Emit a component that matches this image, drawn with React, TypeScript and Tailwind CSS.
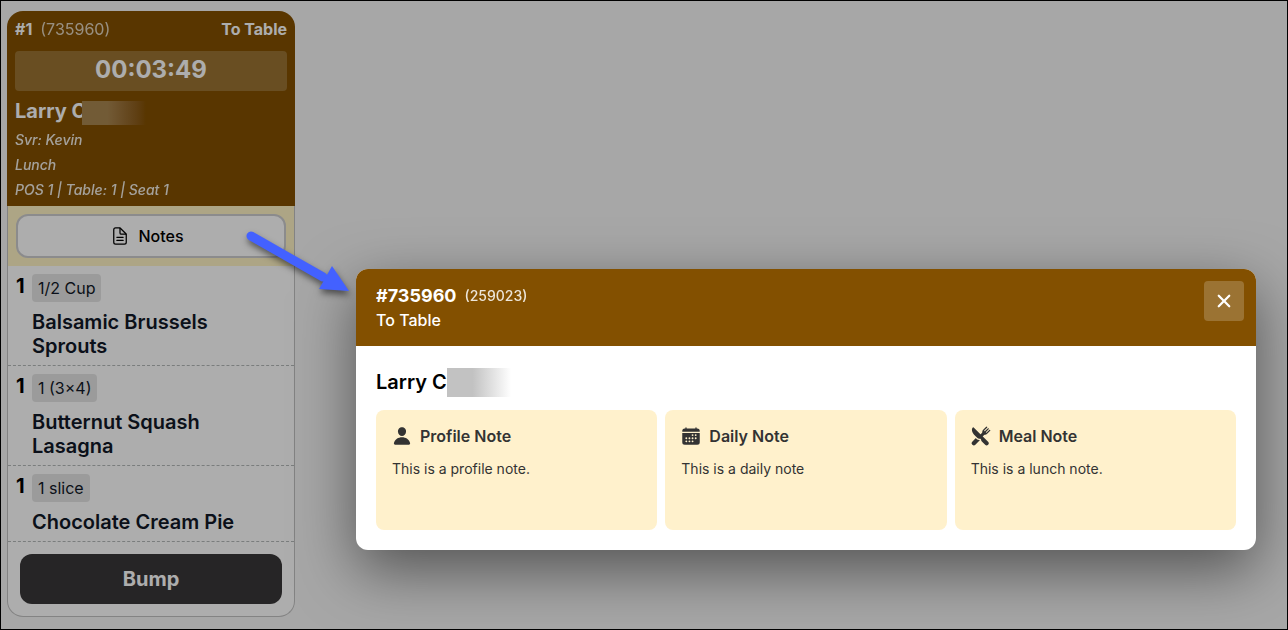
import type { ReactNode } from "react";
import { IoCalendar, IoClose, IoDocumentTextOutline, IoPerson, IoRestaurant } from "react-icons/io5";

interface TicketItem {
  qty: number;
  portion: string;
  name: string;
}

interface Note {
  title: string;
  text: string;
  icon: ReactNode;
}

const items: TicketItem[] = [
  { qty: 1, portion: "1/2 Cup", name: "Balsamic Brussels Sprouts" },
  { qty: 1, portion: "1 (3×4)", name: "Butternut Squash Lasagna" },
  { qty: 1, portion: "1 slice", name: "Chocolate Cream Pie" },
];

const notes: Note[] = [
  { title: "Profile Note", text: "This is a profile note.", icon: <IoPerson size={20} /> },
  { title: "Daily Note", text: "This is a daily note", icon: <IoCalendar size={20} /> },
  { title: "Meal Note", text: "This is a lunch note.", icon: <IoRestaurant size={20} /> },
];

function TicketCard() {
  return (
    <article className="w-72 rounded-2xl bg-white">
      <header className="rounded-t-2xl bg-[#835000] px-2 pt-1.5 pb-1 text-white">
        <div className="flex h-6 items-center gap-2 text-base">
          <span className="font-bold">#1</span>
          <span className="opacity-75">(735960)</span>
          <span className="ml-auto font-bold">To Table</span>
        </div>
        <div className="mt-2.5 flex h-10 items-center justify-center rounded bg-white/20 pb-0.5 text-2xl font-bold">
          00:03:49
        </div>
        <h2 className="relative pt-1 text-xl leading-8 font-bold">
          Larry C
          <span className="absolute top-2.5 left-[67px] h-6 w-16 bg-linear-to-r from-[#a98650] from-40% to-[#835000]" />
        </h2>
        <div className="text-sm leading-[25px] font-medium italic opacity-90">
          <p>Svr: Kevin</p>
          <p>Lunch</p>
          <p>POS 1 | Table: 1 | Seat 1</p>
        </div>
      </header>

      <div className="rounded-b-2xl border-x border-b border-[#c2c2c2]">
        <div className="bg-[#fff3c4] p-2">
          <button
            type="button"
            className="flex h-11 w-full items-center justify-center gap-2 rounded-xl border-2 border-[#cdcdcf] bg-white pr-2 text-base font-medium text-black"
          >
            <IoDocumentTextOutline size={20} />
            Notes
          </button>
        </div>
        <ul>
          {items.map((item) => (
            <li key={item.name} className="flex border-b border-dashed border-[#b4b9b9] px-2 pt-2 pb-[7px]">
              <span className="w-4 shrink-0 text-xl leading-6 font-bold text-black">{item.qty}</span>
              <div className="text-[#111827]">
                <span className="inline-flex h-7 items-center rounded bg-[#e5e5e5] px-1.5 align-top text-base">
                  {item.portion}
                </span>
                <h3 className="mt-2 max-w-52 text-xl leading-6 font-semibold">{item.name}</h3>
              </div>
            </li>
          ))}
        </ul>
        <div className="p-3">
          <button type="button" className="h-[50px] w-full rounded-xl bg-[#393738] text-xl font-bold text-white">
            Bump
          </button>
        </div>
      </div>
    </article>
  );
}

function NotesDialog() {
  return (
    <div className="absolute inset-0 flex items-end justify-end bg-black/32 pr-[31px] pb-[79px]">
      <section
        role="dialog"
        aria-labelledby="notes-title"
        className="w-[900px] max-w-full overflow-hidden rounded-xl bg-white shadow-[0_20px_60px_rgba(0,0,0,0.5)]"
      >
        <header className="flex items-start justify-between bg-[#835000] pr-3 pl-5 text-white">
          <div className="pt-[15px] pb-3.5 leading-6">
            <h2 id="notes-title" className="flex items-center gap-2 text-lg leading-6 font-bold">
              #735960
              <span className="text-sm font-medium opacity-85">(259023)</span>
            </h2>
            <p className="text-base leading-6 font-medium">To Table</p>
          </div>
          <button
            type="button"
            aria-label="Close"
            className="mt-3 flex size-10 items-center justify-center rounded bg-white/20"
          >
            <IoClose size={24} />
          </button>
        </header>
        <div className="p-5">
          <h3 className="relative text-xl leading-8 font-semibold text-black">
            Larry C
            <span className="absolute top-0.5 left-[71px] h-[29px] w-16 bg-linear-to-r from-[#c2c2c2] from-40% to-white" />
          </h3>
          <div className="mt-3 grid grid-cols-3 gap-2">
            {notes.map((note) => (
              <article key={note.title} className="min-h-30 rounded-lg bg-[#fff1cc] p-4 text-[#333333]">
                <h4 className="flex h-5 items-center gap-2 text-base font-semibold">
                  {note.icon}
                  {note.title}
                </h4>
                <p className="mt-[13px] text-sm leading-5">{note.text}</p>
              </article>
            ))}
          </div>
        </div>
      </section>
    </div>
  );
}

// Callout pointing from the Notes button to the dialog it opens
function CalloutArrow() {
  return (
    <svg
      className="pointer-events-none absolute top-[219px] left-[234px] drop-shadow-[1px_4px_3px_rgba(0,0,0,0.5)]"
      width="130"
      height="90"
      viewBox="0 0 130 90"
      aria-hidden="true"
    >
      <path d="M16 16 L88 57" stroke="#4361ff" strokeWidth="9" strokeLinecap="round" />
      <path d="M97 46 L114 71 L84 69 Z" fill="#4361ff" />
    </svg>
  );
}

export default function App() {
  return (
    <main className="relative min-h-screen border border-black bg-[#f6f6f6] px-1.5 pt-2.5 pb-3 font-['Inter',sans-serif]">
      <TicketCard />
      <NotesDialog />
      <CalloutArrow />
    </main>
  );
}
